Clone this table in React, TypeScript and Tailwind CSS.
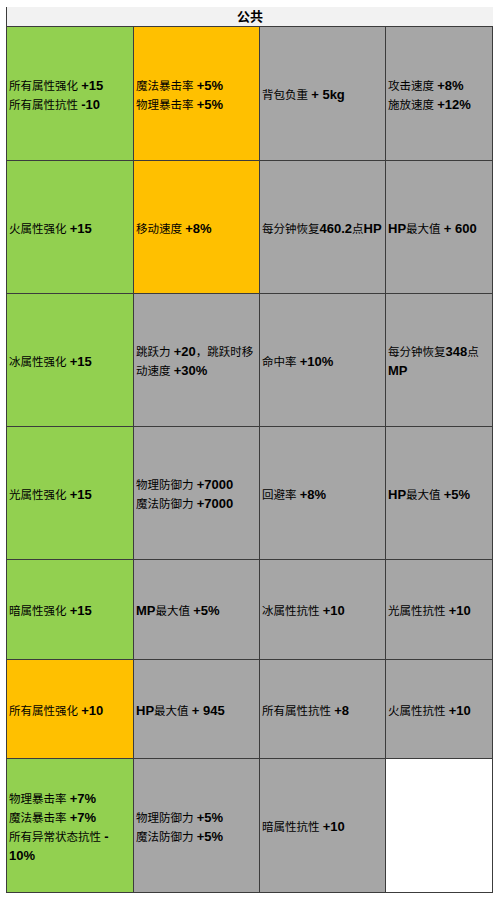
type Tone = "green" | "orange" | "gray" | "white";

type Cell = { tone: Tone; lines: string[] };

const toneClass: Record<Tone, string> = {
  green: "bg-[#92d050]",
  orange: "bg-[#ffc000]",
  gray: "bg-[#a6a6a6]",
  white: "bg-white",
};

const rows: { h: string; cells: Cell[] }[] = [
  {
    h: "h-[134px]",
    cells: [
      { tone: "green", lines: ["所有属性强化 **+15**", "所有属性抗性 **-10**"] },
      { tone: "orange", lines: ["魔法暴击率 **+5%**", "物理暴击率 **+5%**"] },
      { tone: "gray", lines: ["背包负重 **+ 5kg**"] },
      { tone: "gray", lines: ["攻击速度 **+8%**", "施放速度 **+12%**"] },
    ],
  },
  {
    h: "h-[133px]",
    cells: [
      { tone: "green", lines: ["火属性强化 **+15**"] },
      { tone: "orange", lines: ["移动速度 **+8%**"] },
      { tone: "gray", lines: ["每分钟恢复**460.2**点**HP**"] },
      { tone: "gray", lines: ["**HP**最大值 **+ 600**"] },
    ],
  },
  {
    h: "h-[133px]",
    cells: [
      { tone: "green", lines: ["冰属性强化 **+15**"] },
      { tone: "gray", lines: ["跳跃力 **+20**，跳跃时移", "动速度 **+30%**"] },
      { tone: "gray", lines: ["命中率 **+10%**"] },
      { tone: "gray", lines: ["每分钟恢复**348**点", "**MP**"] },
    ],
  },
  {
    h: "h-[133px]",
    cells: [
      { tone: "green", lines: ["光属性强化 **+15**"] },
      { tone: "gray", lines: ["物理防御力 **+7000**", "魔法防御力 **+7000**"] },
      { tone: "gray", lines: ["回避率 **+8%**"] },
      { tone: "gray", lines: ["**HP**最大值 **+5%**"] },
    ],
  },
  {
    h: "h-[100px]",
    cells: [
      { tone: "green", lines: ["暗属性强化 **+15**"] },
      { tone: "gray", lines: ["**MP**最大值 **+5%**"] },
      { tone: "gray", lines: ["冰属性抗性 **+10**"] },
      { tone: "gray", lines: ["光属性抗性 **+10**"] },
    ],
  },
  {
    h: "h-[99px]",
    cells: [
      { tone: "orange", lines: ["所有属性强化 **+10**"] },
      { tone: "gray", lines: ["**HP**最大值 **+ 945**"] },
      { tone: "gray", lines: ["所有属性抗性 **+8**"] },
      { tone: "gray", lines: ["火属性抗性 **+10**"] },
    ],
  },
  {
    h: "h-[134px]",
    cells: [
      {
        tone: "green",
        lines: ["物理暴击率 **+7%**", "魔法暴击率 **+7%**", "所有异常状态抗性 **-**", "**10%**"],
      },
      { tone: "gray", lines: ["物理防御力 **+5%**", "魔法防御力 **+5%**"] },
      { tone: "gray", lines: ["暗属性抗性 **+10**"] },
      { tone: "white", lines: [] },
    ],
  },
];

function Line({ text }: { text: string }) {
  const parts = text.split("**");
  return (
    <div className="h-[19px] leading-[19px] whitespace-nowrap">
      {parts.map((p, i) =>
        i % 2 === 1 ? (
          <span key={i} className="text-[13px] leading-[19px] font-bold">
            {p}
          </span>
        ) : (
          <span key={i} className="text-[11.5px] leading-[19px]">
            {p}
          </span>
        )
      )}
    </div>
  );
}

export default function App() {
  return (
    <div
      className="bg-white w-[500px] h-[900px] pt-[7px] pl-[6px] text-black"
      style={{ fontFamily: "'Liberation Sans', 'Noto Sans CJK SC', sans-serif" }}
    >
      <div className="w-[487px] border-l border-[#3c3c3c]">
        <div className="h-[20px] bg-[#f2f2f2] border-b border-[#3c3c3c] flex items-center justify-center">
          <span className="text-[13px] font-bold leading-none">公共</span>
        </div>
        {rows.map((row, r) => (
          <div key={r} className={`grid grid-cols-[127px_126px_126px_107px] ${row.h}`}>
            {row.cells.map((cell, c) => (
              <div
                key={c}
                className={`${toneClass[cell.tone]} border-r border-b border-[#3c3c3c] flex flex-col justify-center pl-[2px] overflow-hidden`}
              >
                {cell.lines.map((l, i) => (
                  <Line key={i} text={l} />
                ))}
              </div>
            ))}
          </div>
        ))}
      </div>
    </div>
  );
}
